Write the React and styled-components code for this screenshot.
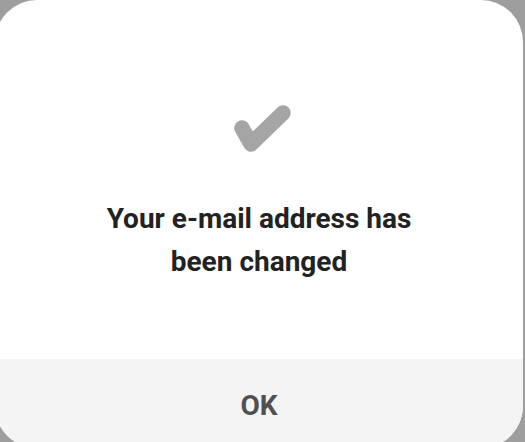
import React from "react";
import styled, { createGlobalStyle } from "styled-components";

const GlobalStyle = createGlobalStyle`
  html, body {
    margin: 0;
    padding: 0;
    height: 100%;
    overflow: hidden;
    background: #9e9e9e;
  }
  #root {
    height: 100%;
  }
`;

const Dialog = styled.div`
  width: 528px;
  height: 448px;
  margin-left: -5px;
  background: #ffffff;
  border-radius: 42px;
  overflow: hidden;
  display: flex;
  flex-direction: column;
  font-family: Roboto, "Liberation Sans", sans-serif;
`;

const Body = styled.div`
  height: 359px;
  box-sizing: border-box;
  padding-top: 100px;
  display: flex;
  flex-direction: column;
  align-items: center;
`;

const CheckIcon = styled.svg`
  display: block;
  width: 64px;
  height: 56px;
  margin-left: 4px;
`;

const Message = styled.div`
  margin-top: 41px;
  font-size: 28px;
  font-weight: 700;
  line-height: 43px;
  color: #222222;
  text-align: center;
`;

const Footer = styled.div`
  flex: 1;
  background: #f4f4f4;
  display: flex;
  align-items: flex-start;
  justify-content: center;
`;

const OkButton = styled.button`
  margin-top: 31px;
  padding: 0;
  border: none;
  background: none;
  font-family: inherit;
  font-size: 28px;
  font-weight: 700;
  line-height: 32px;
  color: #505050;
  cursor: pointer;
`;

export default function App() {
  return (
    <>
      <GlobalStyle />
      <Dialog>
        <Body>
          <CheckIcon viewBox="0 0 64 56">
            <polyline
              points="13,28 22,44 54,13"
              fill="none"
              stroke="#a5a5a5"
              strokeWidth="15.5"
              strokeLinecap="round"
              strokeLinejoin="round"
            />
          </CheckIcon>
          <Message>
            Your e-mail address has
            <br />
            been changed
          </Message>
        </Body>
        <Footer>
          <OkButton>OK</OkButton>
        </Footer>
      </Dialog>
    </>
  );
}
